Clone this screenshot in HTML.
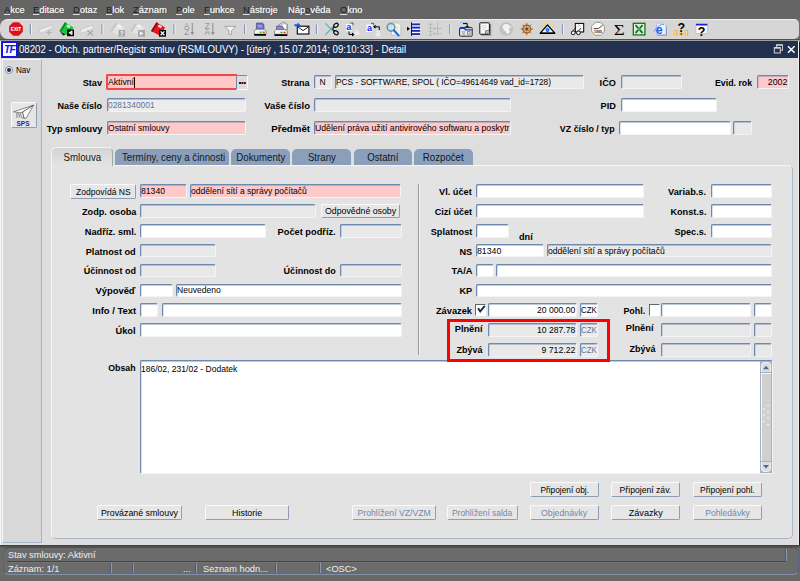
<!DOCTYPE html>
<html lang="cs"><head><meta charset="utf-8"><title>08202 - Obch. partner/Registr smluv</title>
<style>
html,body{margin:0;padding:0}
body{width:800px;height:581px;overflow:hidden;position:relative;background:#6b6b6b;font-family:"Liberation Sans",sans-serif;font-size:11px;color:#000}
div{position:absolute;box-sizing:border-box;white-space:nowrap}
.menu{left:0;top:0;width:800px;height:19px;background:#656565}
.menu span{position:absolute;top:3px;font-size:9.5px;color:#ececec;line-height:13px;transform:scaleX(.98);transform-origin:0 50%}
.menu u{text-decoration:underline;color:#1e1e1e;text-decoration-color:#e0e0e0;text-shadow:none}
.menu span{text-shadow:.35px 0 0 #ececec,.9px .4px 0 #262626}
.tb{left:0;top:18.600px;width:799px;height:20.400px;background:#d6d6d6;border-top:1px solid #ececec;border-radius:8px 5px 5px 8px}
.title{left:1px;top:41px;width:797px;height:17px;background:#22314f;color:#fff;font-size:10px;line-height:17px}
.title span{position:absolute;left:18px;transform:scaleX(.966);transform-origin:0 50%}
.win{left:0;top:58px;width:798px;height:487px;background:#dedede}
.nav{left:2px;top:59px;width:40px;height:484px;background:#d8d8d8;border:1px solid #f6f6f6;border-right-color:#a4b4cc;border-bottom-color:#a4b4cc}
.lb{font-weight:bold;font-size:9.5px;line-height:14px;height:14px;transform:scaleX(.965);transform-origin:100% 50%}
.lb.l{transform-origin:0 50%}
.f{border:1px solid #6f89ae;border-right-color:#f4f4f4;border-bottom-color:#f4f4f4;border-radius:2px;background:#fff;overflow:hidden;font-size:11px;box-shadow:inset 0 1px 0 rgba(111,137,174,.45),inset 1px 0 0 rgba(111,137,174,.25)}
.f{font-size:9.5px}
.f span{position:absolute;left:.1px;right:.6px;top:50%;margin-top:-7px;line-height:14px;height:14px;transform:scaleX(.885);transform-origin:0 50%}
.f.n span{transform:scaleX(.83)}
.f.ra span{transform-origin:100% 50%;text-align:right}
.f.ca span{transform-origin:50% 50%;text-align:center}
.f.g{background:#e9e9e9}
.f.p{background:#ffc9c9}
.f.r{background:#ffc9c9;border:2px solid #f24848;border-right-width:0;border-radius:2px 0 0 2px;box-shadow:none}
.f.d{background:#ececec;color:#5d7696}
.btn{border:1px solid #8c9db5;border-top-color:#fafafa;border-left-color:#fafafa;border-radius:2px;background:#e6e6e6;text-align:center;font-size:9.5px}
.btn span{display:inline-block;transform:scaleX(.91);transform-origin:50% 50%}
.btn.dis{color:#6f88aa}
.tab{top:149px;height:16px;background:#8b9fbb;border-radius:5px 5px 0 0;text-align:center;line-height:17px;font-size:11px;color:#101820}
.tab span{display:inline-block;transform:scaleX(.88);transform-origin:50% 50%}
.tab.act{top:148px;height:18px;background:linear-gradient(#d4d4d4,#e4e4e4);border:1px solid #f4f4f4;border-bottom:none;border-right-color:#9aa;z-index:3;line-height:16px}
.panel{left:51px;top:165px;width:742px;height:374px;background:#e3e3e3;border:1px solid #f6f6f6;border-right-color:#aab6c6;border-bottom-color:#aab6c6;border-radius:0 5px 5px 5px}
.st{color:#efefef;font-size:9.5px;line-height:13px;transform:scaleX(.975);transform-origin:0 50%}
</style></head><body>
<div class="menu">
<span style="left:4px"><u>A</u>kce</span>
<span style="left:33px"><u>E</u>ditace</span>
<span style="left:73px"><u>D</u>otaz</span>
<span style="left:106px"><u>B</u>lok</span>
<span style="left:133px"><u>Z</u>áznam</span>
<span style="left:176px"><u>P</u>ole</span>
<span style="left:204px"><u>F</u>unkce</span>
<span style="left:243px"><u>N</u>ástroje</span>
<span style="left:288px">Náp<u>o</u>věda</span>
<span style="left:340px"><u>O</u>kno</span>
</div>
<div style="left:0;top:39px;width:800px;height:2px;background:linear-gradient(#505050 0,#505050 1px,#9c9c9c 1px)"></div>
<div class="tb"></div>
<svg style="position:absolute;left:0;top:0" width="800" height="60" viewBox="0 0 800 60" font-family="Liberation Sans, sans-serif">
<rect x="29.8" y="24.5" width="1.2" height="9.5" fill="#7f96b8"/><rect x="31.0" y="24.5" width="1" height="9.5" fill="#f2f2f2"/>
<rect x="101.4" y="24.5" width="1.2" height="9.5" fill="#7f96b8"/><rect x="102.6" y="24.5" width="1" height="9.5" fill="#f2f2f2"/>
<rect x="173.4" y="24.5" width="1.2" height="9.5" fill="#7f96b8"/><rect x="174.6" y="24.5" width="1" height="9.5" fill="#f2f2f2"/>
<rect x="244.0" y="24.5" width="1.2" height="9.5" fill="#7f96b8"/><rect x="245.2" y="24.5" width="1" height="9.5" fill="#f2f2f2"/>
<rect x="315.9" y="24.5" width="1.2" height="9.5" fill="#7f96b8"/><rect x="317.1" y="24.5" width="1" height="9.5" fill="#f2f2f2"/>
<rect x="449.2" y="24.5" width="1.2" height="9.5" fill="#7f96b8"/><rect x="450.4" y="24.5" width="1" height="9.5" fill="#f2f2f2"/>
<rect x="561.9" y="24.5" width="1.2" height="9.5" fill="#7f96b8"/><rect x="563.1" y="24.5" width="1" height="9.5" fill="#f2f2f2"/>
<polygon points="22.84,31.83 18.83,35.84 13.17,35.84 9.16,31.83 9.16,26.17 13.17,22.16 18.83,22.16 22.84,26.17" fill="#d9121c"/>
<text x="16" y="31" font-size="5.6" font-weight="bold" fill="#fff" text-anchor="middle" textLength="10.5" lengthAdjust="spacingAndGlyphs">EXIT</text>
<g fill="#ececec" stroke="#bdbdbd" stroke-width=".6"><path d="M39.5 29.5 L52 25 L52.5 28.5 L40 33.5Z"/></g>
<path d="M49 29.5v6M46 32.5h6" stroke="#b4b4b4" stroke-width="1.2" fill="none"/>
<path d="M59.5 31 L65 22.3 L73.5 27.5 L69 36 Z" fill="#16c832"/><path d="M59.5 31 L65 22.3 L66.5 23.2 L61 32Z" fill="#0a8a20"/>
<path d="M67.5 24.5 L70.5 26.3 L69.3 28.3 L66.3 26.5Z" fill="#e8e8e8"/><path d="M60 31.5l3 4 3-1z" fill="#222"/>
<rect x="67" y="29.5" width="7" height="6.7" fill="#000"/><path d="M68.3 32.8 L71.8 30.6 V35Z" fill="#fff"/><rect x="71.5" y="30.6" width="1" height="4.4" fill="#fff"/>
<g fill="#ececec" stroke="#bdbdbd" stroke-width=".6"><path d="M80.5 29.5 L93 25 L93.5 28.5 L81 33.5Z"/></g>
<path d="M87.5 30.5l5.5 5M93 30.5l-5.5 5" stroke="#aaa" stroke-width="1.2" fill="none"/>
<path d="M110.5 31 L116.0 22.3 L124.5 27.5 L120.0 36 Z" fill="#e4e4e4"/><path d="M110.5 31 L116.0 22.3 L117.5 23.2 L112.0 32Z" fill="#c4c4c4"/>
<path d="M118.5 24.5 L121.5 26.3 L120.3 28.3 L117.3 26.5Z" fill="#f6f6f6"/>
<rect x="118.5" y="30" width="6.5" height="6.7" fill="#a8a8a8"/><text x="121.8" y="36" font-size="6.5" font-weight="bold" fill="#f4f4f4" text-anchor="middle">?</text>
<path d="M130.5 31 L136.0 22.3 L144.5 27.5 L140.0 36 Z" fill="#e4e4e4"/><path d="M130.5 31 L136.0 22.3 L137.5 23.2 L132.0 32Z" fill="#c4c4c4"/>
<path d="M138.5 24.5 L141.5 26.3 L140.3 28.3 L137.3 26.5Z" fill="#f6f6f6"/>
<rect x="138" y="30" width="7" height="6.7" fill="#a8a8a8"/><path d="M139.8 31.3 L143.6 33.4 L139.8 35.5Z" fill="#f4f4f4"/>
<path d="M151 31 L156.5 22.3 L165 27.5 L160.5 36 Z" fill="#e8141e"/><path d="M151 31 L156.5 22.3 L158 23.2 L152.5 32Z" fill="#8a0c12"/>
<path d="M159 24.5 L162 26.3 L160.8 28.3 L157.8 26.5Z" fill="#e8e8e8"/>
<rect x="159" y="30" width="7" height="6.7" fill="#000"/><path d="M160.6 31.4l3.8 3.8M164.4 31.4l-3.8 3.8" stroke="#fff" stroke-width="1.3"/>
<g fill="#949494" font-size="8.200" text-anchor="middle"><text x="186.800" y="29">A</text><text x="186.800" y="35.400">Z</text><text x="207.200" y="29">Z</text><text x="207.200" y="35.400">A</text></g>
<g stroke="#949494" stroke-width="1.100" fill="#949494"><path d="M192.3 23v10"/><path d="M190.3 32h4l-2 3.2z" stroke="none"/><path d="M212.8 23v10"/><path d="M210.8 32h4l-2 3.2z" stroke="none"/></g>
<path d="M224.8 26.3 H235.8 L231.6 30.5 V34.3 H229 V30.5Z" fill="#f4f4f4" stroke="#9c9c9c" stroke-width=".9"/>
<path d="M256.4 23 H262.4 L264.0 24.6 V29.5 H256.4Z" fill="#6e6ee0" stroke="#333" stroke-width=".5"/>
<path d="M257.7 25.5h4M257.7 27h5" stroke="#c8c8ff" stroke-width=".6"/>
<path d="M255.7 29.2 H264.7 L266.0 31 V34 H254.2V31Z" fill="#f2f2f2" stroke="#444" stroke-width=".5"/>
<rect x="259.7" y="31.6" width="1.8" height="1.3" fill="#18b428"/><rect x="261.5" y="31.6" width="1.6" height="1.3" fill="#e8c010"/><rect x="263.09999999999997" y="31.6" width="1.6" height="1.3" fill="#e02020"/>
<rect x="254.0" y="34" width="12.2" height="1.8" rx=".8" fill="#000"/>
<path d="M279 24.5 L283.5 22 L287.5 24.5 L287.5 30 L279 30Z" fill="#dcdcdc" stroke="#555" stroke-width=".5"/><path d="M281 25.5l3.5-2 2 1.5v4" fill="#fff" stroke="#777" stroke-width=".4"/>
<path d="M276.5 26 H282 L283.3 27.4 V30 H276.5Z" fill="#8888e0" stroke="#333" stroke-width=".5"/>
<path d="M276 29.5 H285 L287.3 31.2 V34.2 H274.5V31.2Z" fill="#f2f2f2" stroke="#444" stroke-width=".5"/>
<rect x="280.5" y="31.8" width="1.8" height="1.3" fill="#18b428"/><rect x="282.3" y="31.8" width="1.6" height="1.3" fill="#e8c010"/><rect x="283.9" y="31.8" width="1.6" height="1.3" fill="#e02020"/>
<rect x="274.3" y="34.2" width="13.2" height="1.9" rx=".8" fill="#000"/>
<rect x="297.3" y="26.2" width="11.6" height="7.8" fill="#fff" stroke="#000" stroke-width="1.1"/><path d="M297.6 26.8 L303 30.6 L308.6 26.8" fill="none" stroke="#000" stroke-width=".9"/>
<path d="M294.5 24.2 h3 v-1.8 l3.2 2.8 -3.2 2.8 v-1.8 h-3z" fill="#1050ff"/>
<path d="M325.3 23.2 L333.5 31.5 M325.3 34.8 L333.5 26.5" stroke="#7ac8c8" stroke-width="1.5" fill="none"/><path d="M325.6 23.6 L333 31 M325.6 34.4 L333 27" stroke="#3a9a9a" stroke-width=".5" fill="none"/>
<ellipse cx="336" cy="25.3" rx="2.4" ry="1.8" fill="none" stroke="#000" stroke-width="1.1" transform="rotate(-35 336 25.3)"/><ellipse cx="336" cy="32.8" rx="2.4" ry="1.8" fill="none" stroke="#000" stroke-width="1.1" transform="rotate(35 336 32.8)"/><path d="M332.5 29l2-2.3M332.5 29l2 2.3" stroke="#000" stroke-width="1.1"/>
<rect x="346" y="24" width="5.6" height="7.2" fill="#fff"/><text x="348.8" y="30.3" font-size="9" font-weight="bold" fill="#2020ff" text-anchor="middle">a</text>
<path d="M350.3 23h2.8v2.2" fill="none" stroke="#222" stroke-width=".7"/>
<text x="356.6" y="35.3" font-size="9" font-weight="bold" fill="#f4f4f4" text-anchor="middle">a</text>
<path d="M349 31.5v3h3.4" fill="none" stroke="#000" stroke-width="1"/><path d="M352 32.6l2.6 1.9-2.6 1.9z" fill="#000"/>
<rect x="366.6" y="24.6" width="5.8" height="7.4" fill="#fff"/><text x="369.5" y="31" font-size="9" font-weight="bold" fill="#2020ff" text-anchor="middle">a</text>
<text x="377.8" y="36" font-size="9" font-weight="bold" fill="#f4f4f4" text-anchor="middle">a</text>
<path d="M379.3 30v-3.2h-4" fill="none" stroke="#000" stroke-width="1"/><path d="M375.6 24.8l-2.6 2 2.6 2z" fill="#000"/><path d="M371 23.3h2.6v1.6" fill="none" stroke="#222" stroke-width=".7"/>
<path d="M391.5 23 H398.5 L400.8 25.2 V35 H391.5Z" fill="#f4f4f0" stroke="#aaa" stroke-width=".5"/><path d="M393 27h6M393 29h6M393 31h6" stroke="#d8d8c8" stroke-width=".6"/>
<circle cx="391" cy="27.2" r="3.6" fill="#cfe6ee" fill-opacity=".7" stroke="#5aa0b4" stroke-width="1.2"/><circle cx="391" cy="27.2" r="4.3" fill="none" stroke="#666" stroke-width=".4"/><path d="M393.8 30.2 L398.6 35.4" stroke="#2060e8" stroke-width="2" stroke-linecap="round"/>
<path d="M407 26.8l3 2-3 2z" fill="#000"/><rect x="411" y="22.3" width=".9" height="13.6" fill="#000"/>
<rect x="412" y="22.6" width="8" height="13" fill="#fff"/>
<rect x="412" y="23.40" width="8" height="1.9" fill="#1a2ab4"/>
<rect x="412" y="26.65" width="8" height="1.9" fill="#1a2ab4"/>
<rect x="412" y="29.90" width="8" height="1.9" fill="#1a2ab4"/>
<rect x="412" y="33.15" width="8" height="1.9" fill="#1a2ab4"/>
<g stroke="#b4b4b4" stroke-width=".8" fill="none"><path d="M430.5 22.5v13M437.5 22.5v13M428.7 24.5h4M428.7 28h4M428.7 31.5h4M428.7 35h4M437.7 28.5h4.3M437.7 33.5h4.3"/></g><path d="M433.5 27l3 1.6-3 1.6zM433.5 32l3 1.6-3 1.6z" fill="#b4b4b4"/>
<rect x="460" y="22.3" width="7.5" height=".8" fill="#78c8f0"/><path d="M463 23.6h4.2v3" fill="none" stroke="#000" stroke-width="1"/><path d="M465 26.2h4.4l-2.2 2.4z" fill="#000"/>
<rect x="459.6" y="27.6" width="12.6" height="8.6" rx=".8" fill="#e8e8e8" stroke="#222" stroke-width="1"/><path d="M460 28.3h4.5l1 1.6h6.3" fill="none" stroke="#1838c8" stroke-width="1.4"/><path d="M462 32h3M462 34h3M467.5 31.5h2.5v2.8h-2.5z" fill="none" stroke="#555" stroke-width=".6"/>
<rect x="481.2" y="24" width="10" height="11.6" fill="#888"/><rect x="479.8" y="22.8" width="9.6" height="11.4" rx=".6" fill="#fafafa" stroke="#111" stroke-width="1"/><path d="M481.8 25.6h5M481.8 27.6h5M481.8 29.6h3" stroke="#ccc" stroke-width=".7"/><rect x="485.8" y="30.8" width="3.6" height="3.2" fill="#eee" stroke="#222" stroke-width=".7"/><path d="M486.6 32.3l.9.9 1.4-1.7" stroke="#222" stroke-width=".5" fill="none"/>
<circle cx="506.3" cy="29" r="6.2" fill="#c2c2c2"/><circle cx="506.3" cy="29" r="6.2" fill="none" stroke="#b0b0b0" stroke-width=".6"/><path d="M503 25.5c1.5-1.5 4-1.8 5.5-.8c1.2.9 1.8 2 .8 3.2c-.9 1-.4 1.8.3 2.6c.7 1-.6 2.6-1.8 3.4c-1 .5-1.2-1-1.600-2c-.4-1.200-2-.9-2.600-2.200c-.5-1.200-1.400-2.800-.6-4.200z" fill="#f2f2f2"/><path d="M509.500 25.200c1 .3 1.800 1.400 2.200 2.500l-1.500-.3z" fill="#f2f2f2"/>
<g stroke="#a85a14" fill="none"><circle cx="526.8" cy="29" r="3.9" stroke-width="1.3"/><path d="M520.6 29h12.400M526.8 22.800v12.400M522.400 24.600l8.800 8.800M531.200 24.600l-8.800 8.800" stroke-width=".9"/></g><circle cx="526.8" cy="29" r="1.3" fill="#7a3c08"/>
<path d="M547.500 24.200l-1.200-1.800M550 24.800l1.500-1.600M552.200 27l2-1.200M545 24.800l-1.500-1.600M542.800 27l-2-1.200" stroke="#f0d818" stroke-width=".9"/>
<path d="M547.500 25 L554.800 33.200 H540.200Z" fill="#f4f4f4" stroke="#000" stroke-width="1.200" stroke-linejoin="round"/><rect x="540" y="32.600" width="15" height="1.400" fill="#000"/><circle cx="547.500" cy="30" r="1.900" fill="#1060ff"/><circle cx="547.500" cy="30" r=".7" fill="#60e0ff"/>
<rect x="575.300" y="23.400" width="8.400" height="8.600" fill="#f8f8f8" stroke="#000" stroke-width="1"/><path d="M577.500 26l1.500-1.200 1 .8" stroke="#888" stroke-width=".5" fill="none"/><circle cx="573.200" cy="32.800" r="1.900" fill="#f4f4f4" stroke="#000" stroke-width=".9"/><circle cx="578.400" cy="32.800" r="1.900" fill="#f4f4f4" stroke="#000" stroke-width=".9"/><path d="M573 31l2.800-3.600M578.600 31l2.400-3" stroke="#000" stroke-width=".7"/>
<polygon points="604.37,31.44 600.64,35.17 595.36,35.17 591.63,31.44 591.63,26.16 595.36,22.43 600.64,22.43 604.37,26.16" fill="#fbfbfb" stroke="#8c8c8c" stroke-width=".9"/><path d="M593.800 28.600h4.600l4.200-3.400" stroke="#444" stroke-width="1" fill="none"/><text x="598" y="33.300" font-size="3.600" font-weight="bold" fill="#222" text-anchor="middle">1995</text>
<text x="619.300" y="34.800" font-size="15" fill="#000" text-anchor="middle" font-family="Liberation Serif, serif" textLength="11" lengthAdjust="spacingAndGlyphs">Σ</text>
<rect x="633.300" y="23.300" width="11.600" height="11.600" fill="#e8f0e4" stroke="#18701c" stroke-width="1.300"/><path d="M635.500 25.200 L642.600 33M642.600 25.200 L635.500 33" stroke="#187a20" stroke-width="1.900"/><path d="M639 24v10.400M634 29.100h10.400" stroke="#b8d0b8" stroke-width=".5"/>
<path d="M656.500 23.200h7.300l2.200 2v9.600h-9.500z" fill="#eef2ff" stroke="#9aa8d8" stroke-width=".6"/><path d="M657.500 35.300h9v-9" stroke="#8890b8" stroke-width=".8" fill="none"/>
<text x="659.300" y="34" font-size="12.500" font-weight="bold" fill="#1c62e0" text-anchor="middle">e</text><path d="M654.200 31.500c1.500-4 6-7.500 9.800-7" stroke="#4a94f0" stroke-width=".9" fill="none"/>
<text x="681.300" y="31.800" font-size="12.500" font-weight="bold" fill="#000" text-anchor="middle">?</text>
<rect x="673.800" y="30.400" width="3.600" height="4.800" fill="#f0a830"/><rect x="674.600" y="31" width="1.600" height="3.600" fill="#fde6b0"/><rect x="684.800" y="30.400" width="3.400" height="4.800" fill="#f0a830"/><rect x="685.600" y="31" width="1.500" height="3.600" fill="#fde6b0"/><rect x="679.300" y="32.600" width="3.800" height="2.800" fill="#f0c060"/><rect x="680.600" y="33.300" width="1.300" height="1.300" fill="#000"/>
<rect x="696" y="24" width="11.400" height="9.300" fill="#fafafa" stroke="#aaa" stroke-width=".5"/><rect x="696" y="23.800" width="11.400" height="1.700" fill="#2a18e0"/><text x="701.500" y="35.600" font-size="12.500" font-weight="bold" fill="#000" text-anchor="middle">?</text>
</svg>
<div class="title"><span>08202 - Obch. partner/Registr smluv (RSMLOUVY) - [úterý , 15.07.2014; 09:10:33] - Detail</span></div>
<div style="left:2px;top:42px;width:15px;height:15px;background:#fff;border:1px solid #1414e0"></div>
<div style="left:3px;top:43px;width:13px;height:13px;font-size:10.5px;line-height:13px;font-weight:bold;font-style:italic;color:#1414f0;text-align:center;letter-spacing:-1px">TF</div>
<svg style="position:absolute;left:770px;top:41px" width="30" height="17" viewBox="770 41 30 17"><rect x="776.500" y="44.800" width="6" height="5.400" fill="none" stroke="#c8c8c8" stroke-width="1"/><rect x="776.500" y="44.500" width="6" height="1.200" fill="#d8d8d8"/><rect x="774.300" y="47.600" width="6" height="5.400" fill="#243450" stroke="#d0d0d0" stroke-width="1"/><rect x="774.300" y="47.300" width="6" height="1.300" fill="#e0e0e0"/><path d="M788 46.200l6.600 6.600M794.600 46.200l-6.600 6.600" stroke="#fff" stroke-width="1.500"/></svg>
<div class="win"></div>
<div class="nav"></div>
<div style="left:798px;top:41px;width:1px;height:504px;background:#f0f0f0"></div><div style="left:799px;top:42px;width:1px;height:503px;background:#161616"></div>
<div style="left:0;top:41px;width:1px;height:504px;background:#f4f4f4"></div>
<div style="left:4px;top:63px;width:27px;height:13px;background:#dadada"></div>
<div style="left:5px;top:66px;width:8px;height:8px;border-radius:50%;background:#f4f4f4;border:1px solid #7a8aa0"></div>
<div style="left:7px;top:68px;width:4px;height:4px;border-radius:50%;background:#1c2a48"></div>
<div style="left:16px;top:64px;font-size:9px;line-height:13px;transform:scaleX(.9);transform-origin:0 50%">Nav</div>
<div class="btn" style="left:11px;top:102px;width:26px;height:26px"></div>
<svg style="position:absolute;left:11px;top:102px" width="26" height="26" viewBox="11 102 26 26"><path d="M13.500 111.800 L33.500 105.200 L26 118.500 L22 117.800 L20.300 112.800Z" fill="#fafafa" stroke="#444" stroke-width=".6" stroke-linejoin="round"/><path d="M33.500 105.200 L22.500 112 L24 118" fill="none" stroke="#222" stroke-width=".7"/><path d="M20.300 112.800l2.200-.8M17 113v5M18.500 113.500l1.500 4" stroke="#333" stroke-width=".6" fill="none"/><text x="23" y="126" font-family="Liberation Sans, sans-serif" font-size="7" font-weight="bold" fill="#1a1ab0" text-anchor="middle" textLength="13" lengthAdjust="spacingAndGlyphs">SPS</text></svg>
<div class="lb " style="right:698.00px;top:75.70px">Stav</div>
<div class="f r" style="left:106px;top:74px;width:131px;height:16px;"><span style="transform:scaleX(0.912)">Aktivní</span></div>
<div style="left:134px;top:77px;width:1px;height:11px;background:#000"></div>
<div style="left:236px;top:75px;width:12px;height:15px;background:#dcdcdc;border:1px solid #6f89ae;border-right-color:#fafafa;border-bottom-color:#fafafa;border-radius:0 2px 2px 0"></div>
<div style="left:239px;top:82px;width:1.600px;height:1.600px;background:#3a1010;box-shadow:2.400px 0 0 #3a1010,4.800px 0 0 #3a1010"></div>
<div class="lb " style="right:490.00px;top:75.70px;transform:scaleX(0.957)">Strana</div>
<div class="f g ca" style="left:314px;top:75px;width:18px;height:14px;"><span>N</span></div>
<div class="f g" style="left:335px;top:75px;width:249px;height:14px;"><span style="transform:scaleX(0.876)">PCS - SOFTWARE, SPOL ( IČO=49614649 vad_id=1728)</span></div>
<div class="lb " style="right:184.00px;top:75.70px">IČO</div>
<div class="f g" style="left:621px;top:75px;width:61px;height:14px;"><span></span></div>
<div class="lb " style="right:48.00px;top:75.70px;transform:scaleX(0.927)">Evid. rok</div>
<div class="f p ra" style="left:757px;top:75px;width:32px;height:14px;"><span style="transform:scaleX(0.925)">2002</span></div>
<div class="lb " style="right:698.00px;top:98.60px;transform:scaleX(0.948)">Naše číslo</div>
<div class="f d" style="left:107px;top:98px;width:139px;height:14px;"><span style="transform:scaleX(0.881)">0281340001</span></div>
<div class="lb " style="right:490.00px;top:98.60px;transform:scaleX(0.997)">Vaše číslo</div>
<div class="f g" style="left:314px;top:98px;width:197px;height:14px;"><span></span></div>
<div class="lb " style="right:184.00px;top:98.60px">PID</div>
<div class="f w" style="left:621px;top:98px;width:96px;height:14px;"><span></span></div>
<div class="lb " style="right:698.00px;top:121.60px;transform:scaleX(0.968)">Typ smlouvy</div>
<div class="f p" style="left:107px;top:121px;width:139px;height:14px;"><span style="transform:scaleX(0.902)">Ostatní smlouvy</span></div>
<div class="lb " style="right:490.00px;top:121.60px;transform:scaleX(1.021)">Předmět</div>
<div class="f p" style="left:314px;top:121px;width:197px;height:14px;"><span style="transform:scaleX(0.914)">Udělení práva užití antivirového softwaru a poskytr</span></div>
<div class="lb " style="right:185.00px;top:121.60px;transform:scaleX(0.935)">VZ číslo / typ</div>
<div class="f w" style="left:619px;top:121px;width:112px;height:14px;"><span></span></div>
<div class="f g" style="left:733px;top:121px;width:19px;height:14px;"><span></span></div>
<div class="panel"></div>
<div class="tab act" style="left:51px;width:62px;top:147px;height:19px;line-height:18px"><span>Smlouva</span></div>
<div class="tab" style="left:115px;width:114px"><span>Termíny, ceny a činnosti</span></div>
<div class="tab" style="left:231px;width:59px"><span>Dokumenty</span></div>
<div class="tab" style="left:292px;width:59px"><span>Strany</span></div>
<div class="tab" style="left:354px;width:58px"><span>Ostatní</span></div>
<div class="tab" style="left:414px;width:59px"><span>Rozpočet</span></div>
<div class="btn" style="left:70px;top:183.5px;width:66px;height:15.0px;line-height:13.0px"><span style="transform:scaleX(0.899)">Zodpovídá NS</span></div>
<div class="f p" style="left:140px;top:184.3px;width:47px;height:13.5px;"><span style="transform:scaleX(0.910)">81340</span></div>
<div class="f p" style="left:190px;top:184.3px;width:211px;height:13.5px;"><span style="transform:scaleX(0.899)">oddělení sítí a správy počítačů</span></div>
<div class="lb " style="right:664.00px;top:204.85px;transform:scaleX(0.966)">Zodp. osoba</div>
<div class="f g" style="left:140px;top:204.15px;width:176px;height:13.5px;"><span></span></div>
<div class="btn" style="left:321px;top:203.65px;width:79px;height:14.5px;line-height:12.5px"><span style="transform:scaleX(0.922)">Odpovědné osoby</span></div>
<div class="lb " style="right:664.00px;top:224.70px;transform:scaleX(0.966)">Nadříz. sml.</div>
<div class="f w" style="left:140px;top:224.0px;width:126px;height:13.5px;"><span></span></div>
<div class="lb " style="right:464.00px;top:224.70px;transform:scaleX(0.973)">Počet podříz.</div>
<div class="f g" style="left:340px;top:224.0px;width:62px;height:13.5px;"><span></span></div>
<div class="lb " style="right:664.00px;top:244.55px;transform:scaleX(0.967)">Platnost od</div>
<div class="f g" style="left:140px;top:243.85px;width:76px;height:13.500000000000028px;"><span></span></div>
<div class="lb " style="right:664.00px;top:264.40px;transform:scaleX(0.948)">Účinnost od</div>
<div class="f g" style="left:140px;top:263.7px;width:76px;height:13.5px;"><span></span></div>
<div class="lb " style="right:464.00px;top:264.40px;transform:scaleX(0.953)">Účinnost do</div>
<div class="f g" style="left:340px;top:263.7px;width:62px;height:13.5px;"><span></span></div>
<div class="lb " style="right:664.00px;top:284.25px;transform:scaleX(0.990)">Výpověď</div>
<div class="f w" style="left:140px;top:283.55px;width:33px;height:13.5px;"><span></span></div>
<div class="f w" style="left:176px;top:283.55px;width:226px;height:13.5px;"><span style="transform:scaleX(0.901)">Neuvedeno</span></div>
<div class="lb " style="right:664.00px;top:304.10px;transform:scaleX(0.992)">Info / Text</div>
<div class="f w" style="left:140px;top:303.4px;width:18px;height:13.5px;"><span></span></div>
<div class="f w" style="left:162px;top:303.4px;width:240px;height:13.5px;"><span></span></div>
<div class="lb " style="right:664.00px;top:323.95px;transform:scaleX(0.976)">Úkol</div>
<div class="f w" style="left:140px;top:323.25px;width:262px;height:13.5px;"><span></span></div>
<div style="left:418px;top:184px;width:2px;height:171px;border-left:1px solid #9a9a9a;border-right:1px solid #f4f4f4"></div>
<div class="lb " style="right:328.00px;top:185.00px;transform:scaleX(0.971)">Vl. účet</div>
<div class="f w" style="left:476px;top:184.3px;width:168px;height:13.5px;"><span></span></div>
<div class="lb " style="right:328.00px;top:204.85px;transform:scaleX(0.955)">Cizí účet</div>
<div class="f w" style="left:476px;top:204.15px;width:168px;height:13.5px;"><span></span></div>
<div class="lb " style="right:328.00px;top:224.70px;transform:scaleX(0.960)">Splatnost</div>
<div class="f w" style="left:476px;top:224.0px;width:33px;height:13.5px;"><span></span></div>
<div class="lb l" style="left:519px;top:230.3px">dní</div>
<div class="lb " style="right:328.00px;top:244.55px">NS</div>
<div class="f w" style="left:476px;top:243.85px;width:68px;height:13.500000000000028px;"><span style="transform:scaleX(0.920)">81340</span></div>
<div class="f g" style="left:547px;top:243.85px;width:225px;height:13.500000000000028px;"><span style="transform:scaleX(0.906)">oddělení sítí a správy počítačů</span></div>
<div class="lb " style="right:328.00px;top:264.40px;transform:scaleX(0.981)">TA/A</div>
<div class="f w" style="left:476px;top:263.7px;width:18px;height:13.5px;"><span></span></div>
<div class="f w" style="left:496px;top:263.7px;width:276px;height:13.5px;"><span></span></div>
<div class="lb " style="right:328.00px;top:284.25px">KP</div>
<div class="f w" style="left:476px;top:283.55px;width:296px;height:13.5px;"><span></span></div>
<div class="lb " style="right:328.00px;top:304.10px;transform:scaleX(0.974)">Závazek</div>
<div class="f w ra" style="left:488px;top:303.4px;width:89px;height:13.5px;"><span style="transform:scaleX(0.906)">20 000.00</span></div>
<div class="f w n" style="left:580px;top:303.4px;width:18px;height:13.5px;"><span>CZK</span></div>
<div class="lb " style="right:317.40px;top:322.40px;transform:scaleX(0.975)">Plnění</div>
<div class="f g ra" style="left:488px;top:323.25px;width:89px;height:13.5px;"><span style="transform:scaleX(0.906)">10 287.78</span></div>
<div class="f d n" style="left:580px;top:323.25px;width:18px;height:13.5px;"><span>CZK</span></div>
<div class="lb " style="right:317.40px;top:342.60px;transform:scaleX(0.947)">Zbývá</div>
<div class="f g ra" style="left:488px;top:343.1px;width:89px;height:13.5px;"><span style="transform:scaleX(0.914)">9 712.22</span></div>
<div class="f d n" style="left:580px;top:343.1px;width:18px;height:13.5px;"><span>CZK</span></div>
<div class="lb " style="right:94.00px;top:185.00px;transform:scaleX(0.974)">Variab.s.</div>
<div class="f w" style="left:711px;top:184.3px;width:61px;height:13.5px;"><span></span></div>
<div class="lb " style="right:94.00px;top:204.85px;transform:scaleX(0.962)">Konst.s.</div>
<div class="f w" style="left:711px;top:204.15px;width:61px;height:13.5px;"><span></span></div>
<div class="lb " style="right:94.00px;top:224.70px;transform:scaleX(0.956)">Spec.s.</div>
<div class="f w" style="left:711px;top:224.0px;width:61px;height:13.5px;"><span></span></div>
<div class="lb " style="right:154.70px;top:304.20px;transform:scaleX(0.939)">Pohl.</div>
<div class="f w" style="left:661px;top:303.4px;width:90px;height:13.5px;"><span></span></div>
<div class="f w" style="left:754px;top:303.4px;width:18px;height:13.5px;"><span></span></div>
<div class="lb " style="right:146.60px;top:320.90px;transform:scaleX(0.975)">Plnění</div>
<div class="f g" style="left:661px;top:323.25px;width:90px;height:13.5px;"><span></span></div>
<div class="f g" style="left:754px;top:323.25px;width:18px;height:13.5px;"><span></span></div>
<div class="lb " style="right:144.50px;top:342.40px;transform:scaleX(0.947)">Zbývá</div>
<div class="f g" style="left:661px;top:343.1px;width:90px;height:13.5px;"><span></span></div>
<div class="f g" style="left:754px;top:343.1px;width:18px;height:13.5px;"><span></span></div>
<div style="left:475px;top:304px;width:11px;height:12px;background:#fff;border:1px solid #666;border-right-color:#fff;border-bottom-color:#fff"></div>
<svg style="position:absolute;left:475px;top:303px" width="12" height="12" viewBox="0 0 12 12"><path d="M3 5.200 L5.200 8.400 L9.800 2.800" fill="none" stroke="#1d2c4c" stroke-width="1.900"/></svg>
<div style="left:649px;top:304px;width:11px;height:12px;background:#fff;border:1px solid #666;border-right-color:#fff;border-bottom-color:#fff"></div>
<div class="lb " style="right:664.00px;top:361.00px;transform:scaleX(0.927)">Obsah</div>
<div class="f w" style="left:140px;top:360px;width:633px;height:114px"><span style="top:.5px;margin-top:0;transform:scaleX(.898)">186/02, 231/02 - Dodatek</span></div>
<div style="left:760px;top:361px;width:12px;height:112px;background:#a2b2ca"></div>
<div style="left:761px;top:362px;width:10px;height:10px;background:#dcdcdc;border:1px solid #f2f2f2;border-bottom-color:#dcdcdc;border-radius:4px 4px 0 0"></div>
<div style="left:761px;top:373px;width:10px;height:88px;background:#d0d0d0;border-left:1px solid #f4f4f4;border-top:1px solid #f4f4f4"></div>
<div style="left:761px;top:462px;width:10px;height:10px;background:#dcdcdc;border:1px solid #f2f2f2;border-top-color:#dcdcdc;border-radius:0 0 4px 4px"></div>
<svg style="position:absolute;left:760px;top:361px" width="12" height="112" viewBox="760 361 12 112"><path d="M763 369.300 L766 365.800 L769 369.300Z" fill="#4a689a"/><path d="M763 465 L766 468.500 L769 465Z" fill="#4a689a"/><g fill="#fff"><circle cx="764" cy="409" r=".8"/><circle cx="764" cy="415" r=".8"/><circle cx="764" cy="421.500" r=".8"/><circle cx="768" cy="405.500" r=".8"/><circle cx="768" cy="412" r=".8"/><circle cx="768" cy="418" r=".8"/><circle cx="768" cy="424.600" r=".8"/></g></svg>
<div style="left:447px;top:319px;width:163px;height:43px;border:3px solid #fe0000"></div>
<div class="btn" style="left:530px;top:482px;width:69px;height:15px;line-height:13px"><span style="transform:scaleX(0.876)">Připojení obj.</span></div>
<div class="btn" style="left:611px;top:482px;width:69px;height:15px;line-height:13px"><span style="transform:scaleX(0.908)">Připojení záv.</span></div>
<div class="btn" style="left:693px;top:482px;width:69px;height:15px;line-height:13px"><span style="transform:scaleX(0.899)">Připojení pohl.</span></div>
<div class="btn" style="left:97px;top:505px;width:85px;height:15px;line-height:13px"><span style="transform:scaleX(0.930)">Provázané smlouvy</span></div>
<div class="btn" style="left:205px;top:505px;width:84px;height:15px;line-height:13px"><span style="transform:scaleX(0.935)">Historie</span></div>
<div class="btn dis" style="left:352px;top:505px;width:84px;height:15px;line-height:13px"><span style="transform:scaleX(0.911)">Prohlížení VZ/VZM</span></div>
<div class="btn dis" style="left:447px;top:505px;width:71px;height:15px;line-height:13px"><span style="transform:scaleX(0.882)">Prohlížení salda</span></div>
<div class="btn dis" style="left:530px;top:505px;width:69px;height:15px;line-height:13px"><span style="transform:scaleX(0.919)">Objednávky</span></div>
<div class="btn" style="left:611px;top:505px;width:69px;height:15px;line-height:13px"><span style="transform:scaleX(0.964)">Závazky</span></div>
<div class="btn dis" style="left:693px;top:505px;width:69px;height:15px;line-height:13px"><span style="transform:scaleX(0.908)">Pohledávky</span></div>
<div style="left:0;top:545px;width:800px;height:36px;background:linear-gradient(#3a3a3a 0,#5a5a5a 2px,#6a6a6a 3px,#6a6a6a 30px,#686868 31px)"></div>
<div style="left:3px;top:547px;width:796px;height:28px;background:#6b6b6b;border:1px solid #55657f;border-top-color:#454f5e;border-bottom-color:#8090a8;border-radius:6px"></div>
<div style="left:7px;top:561px;width:779px;height:1px;background:#3e4656"></div><div style="left:7px;top:562px;width:779px;height:1px;background:#747474"></div>
<div style="left:110px;top:563px;width:2px;height:10px;border-left:1px solid #4a5a78;border-right:1px solid #8a98b0"></div>
<div style="left:131.5px;top:563px;width:2px;height:10px;border-left:1px solid #4a5a78;border-right:1px solid #8a98b0"></div>
<div style="left:194.5px;top:563px;width:2px;height:10px;border-left:1px solid #4a5a78;border-right:1px solid #8a98b0"></div>
<div style="left:274.8px;top:563px;width:2px;height:10px;border-left:1px solid #4a5a78;border-right:1px solid #8a98b0"></div>
<div style="left:319px;top:563px;width:2px;height:10px;border-left:1px solid #4a5a78;border-right:1px solid #8a98b0"></div>
<div style="left:785px;top:549px;width:2px;height:12px;border-left:1px solid #4a5a78;border-right:1px solid #8a98b0"></div>
<div class="st" style="left:8px;top:547.800px">Stav smlouvy: Aktivní</div>
<div class="st" style="left:8px;top:562.200px">Záznam: 1/1</div>
<div class="st" style="left:183px;top:562.200px">...</div>
<div class="st" style="left:203px;top:562.200px">Seznam hodn...</div>
<div class="st" style="left:326px;top:562.200px">&lt;OSC&gt;</div>
</body></html>
